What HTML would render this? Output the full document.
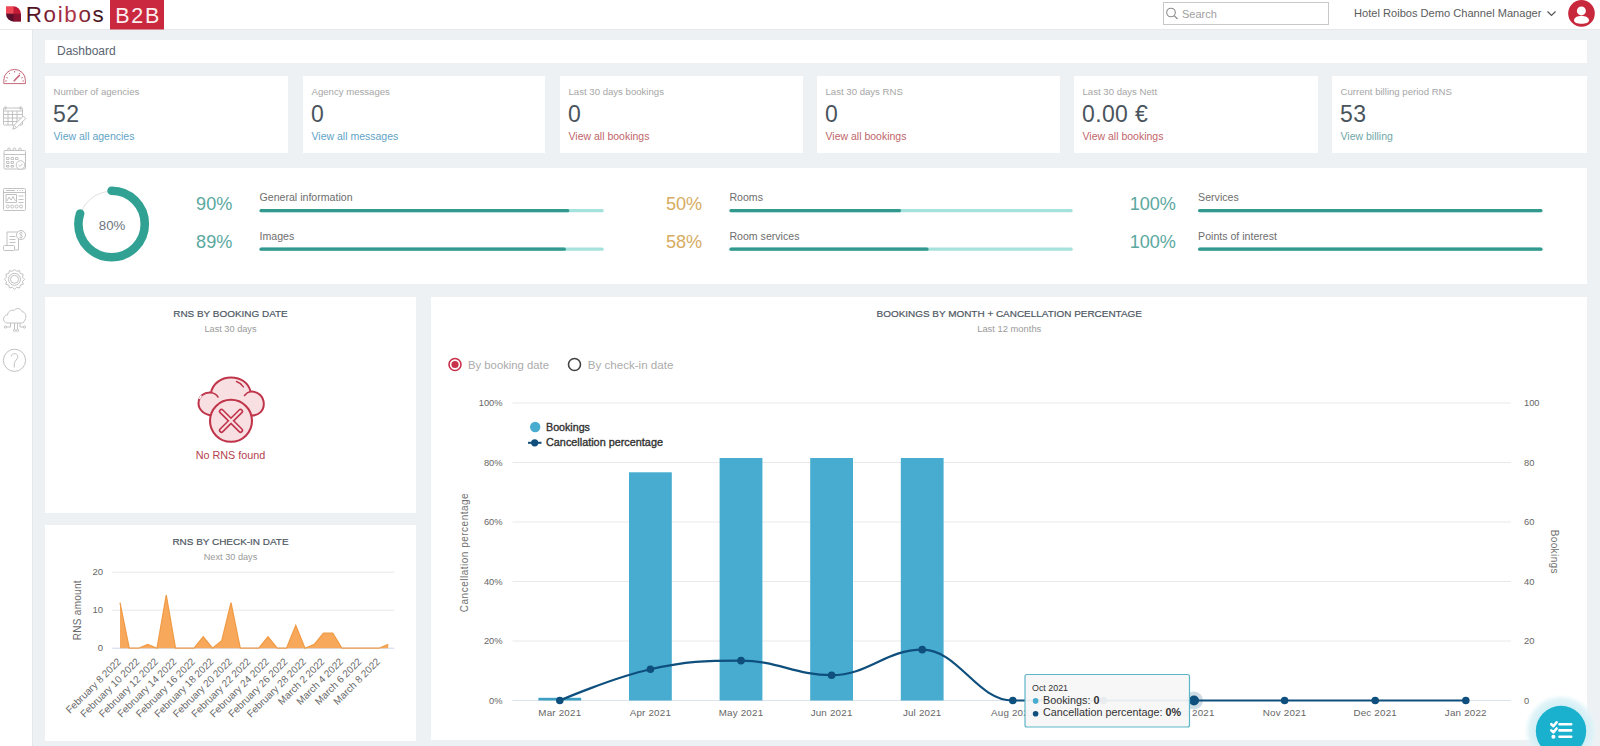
<!DOCTYPE html>
<html><head><meta charset="utf-8"><title>Dashboard</title>
<style>
html,body{margin:0;padding:0;}
body{width:1600px;height:746px;overflow:hidden;position:relative;background:#eef1f4;font-family:"Liberation Sans", sans-serif;}
svg text{font-family:"Liberation Sans", sans-serif;}
</style></head><body>
<div style="position:absolute;left:0px;top:0px;width:1600px;height:29px;background:#ffffff;z-index:2"></div><div style="position:absolute;left:0px;top:29px;width:1600px;height:1px;background:#e6e9ec;z-index:2"></div><div style="position:absolute;left:0px;top:30px;width:32px;height:716px;background:#ffffff;"></div><div style="position:absolute;left:32px;top:30px;width:1px;height:716px;background:#e4e8ec;"></div><div style="position:absolute;left:45px;top:40px;width:1542px;height:23px;background:#ffffff;"></div><div style="position:absolute;left:45px;top:76px;width:243px;height:77px;background:#ffffff;"></div><div style="position:absolute;left:303px;top:76px;width:242px;height:77px;background:#ffffff;"></div><div style="position:absolute;left:560px;top:76px;width:243px;height:77px;background:#ffffff;"></div><div style="position:absolute;left:817px;top:76px;width:243px;height:77px;background:#ffffff;"></div><div style="position:absolute;left:1074px;top:76px;width:244px;height:77px;background:#ffffff;"></div><div style="position:absolute;left:1332px;top:76px;width:255px;height:77px;background:#ffffff;"></div><div style="position:absolute;left:45px;top:168px;width:1542px;height:116px;background:#ffffff;"></div><div style="position:absolute;left:45px;top:297px;width:371px;height:216px;background:#ffffff;"></div><div style="position:absolute;left:45px;top:525px;width:371px;height:216px;background:#ffffff;"></div><div style="position:absolute;left:431px;top:297px;width:1156px;height:443px;background:#ffffff;"></div>
<svg width="1600" height="746" viewBox="0 0 1600 746" style="position:absolute;left:0;top:0;z-index:3">
<defs><clipPath id="leaf"><path d="M6,6.2 H13 A8,8 0 0 1 21,14.2 V21.7 H14 A8,8 0 0 1 6,13.7 Z"/></clipPath><linearGradient id="rg" x1="0" x2="1" y1="0" y2="0"><stop offset="0" stop-color="#3c0d20"/><stop offset="0.45" stop-color="#a02a40"/><stop offset="0.6" stop-color="#b03446"/><stop offset="1" stop-color="#2e0a18"/></linearGradient></defs>
<g clip-path="url(#leaf)"><rect x="6" y="6" width="8" height="8" fill="#ee4857"/><rect x="13.5" y="6" width="8" height="8" fill="#c21a36"/><rect x="6" y="13.7" width="8" height="8.2" fill="#5a0f2c"/><rect x="13.5" y="13.7" width="8" height="8.2" fill="#86122f"/></g>
<text x="25.8" y="22.1" font-size="22.4" fill="url(#rg)" font-weight="normal" text-anchor="start" letter-spacing="1.65">Roibos</text>
<rect x="110" y="0" width="54" height="29.5" fill="#c9283e"/>
<text x="138.2" y="22.8" font-size="21.5" fill="#fdeef0" font-weight="normal" text-anchor="middle" letter-spacing="1.7">B2B</text>
<rect x="1163.5" y="2.5" width="165" height="22" fill="#fff" stroke="#c8c8c8" stroke-width="1"/>
<circle cx="1171" cy="12.5" r="4.3" fill="none" stroke="#8a8a8a" stroke-width="1.1"/><path d="M1174.2,15.7 L1177.5,19" stroke="#8a8a8a" stroke-width="1.2"/>
<text x="1182" y="18" font-size="11" fill="#a0a0a0" font-weight="normal" text-anchor="start" >Search</text>
<text x="1354" y="17" font-size="11.1" fill="#5c5c5c" font-weight="normal" text-anchor="start" >Hotel Roibos Demo Channel Manager</text>
<path d="M1547.5,11.5 L1551.5,15.5 L1555.5,11.5" fill="none" stroke="#555" stroke-width="1.2"/>
<circle cx="1581.5" cy="13.4" r="13.3" fill="#c8283c"/>
<circle cx="1581.4" cy="10.9" r="4.5" fill="#fff"/><path d="M1574,20.5 C1574,17.5 1577.5,16.1 1581.5,16.1 C1585.5,16.1 1589,17.5 1589,20.5 C1589,22.5 1585.5,23.8 1581.5,23.8 C1577.5,23.8 1574,22.5 1574,20.5 Z" fill="#fff"/>
<text x="57" y="54.7" font-size="12" fill="#5a6470" font-weight="normal" text-anchor="start" >Dashboard</text>
<text x="53.5" y="94.7" font-size="9.6" fill="#a6a6a6" font-weight="normal" text-anchor="start" >Number of agencies</text>
<text x="53.0" y="121.6" font-size="23" fill="#4a545d" font-weight="normal" text-anchor="start" letter-spacing="0.35">52</text>
<text x="53.5" y="140" font-size="10.5" fill="#5fa3c6" font-weight="normal" text-anchor="start" >View all agencies</text>
<text x="311.5" y="94.7" font-size="9.6" fill="#a6a6a6" font-weight="normal" text-anchor="start" >Agency messages</text>
<text x="311.0" y="121.6" font-size="23" fill="#4a545d" font-weight="normal" text-anchor="start" letter-spacing="0.35">0</text>
<text x="311.5" y="140" font-size="10.5" fill="#5fa3c6" font-weight="normal" text-anchor="start" >View all messages</text>
<text x="568.5" y="94.7" font-size="9.6" fill="#a6a6a6" font-weight="normal" text-anchor="start" >Last 30 days bookings</text>
<text x="568.0" y="121.6" font-size="23" fill="#4a545d" font-weight="normal" text-anchor="start" letter-spacing="0.35">0</text>
<text x="568.5" y="140" font-size="10.5" fill="#c0666a" font-weight="normal" text-anchor="start" >View all bookings</text>
<text x="825.5" y="94.7" font-size="9.6" fill="#a6a6a6" font-weight="normal" text-anchor="start" >Last 30 days RNS</text>
<text x="825.0" y="121.6" font-size="23" fill="#4a545d" font-weight="normal" text-anchor="start" letter-spacing="0.35">0</text>
<text x="825.5" y="140" font-size="10.5" fill="#c0666a" font-weight="normal" text-anchor="start" >View all bookings</text>
<text x="1082.5" y="94.7" font-size="9.6" fill="#a6a6a6" font-weight="normal" text-anchor="start" >Last 30 days Nett</text>
<text x="1082.0" y="121.6" font-size="23" fill="#4a545d" font-weight="normal" text-anchor="start" letter-spacing="0.35">0.00 €</text>
<text x="1082.5" y="140" font-size="10.5" fill="#c0666a" font-weight="normal" text-anchor="start" >View all bookings</text>
<text x="1340.5" y="94.7" font-size="9.6" fill="#a6a6a6" font-weight="normal" text-anchor="start" >Current billing period RNS</text>
<text x="1340.0" y="121.6" font-size="23" fill="#4a545d" font-weight="normal" text-anchor="start" letter-spacing="0.35">53</text>
<text x="1340.5" y="140" font-size="10.5" fill="#6fa6a6" font-weight="normal" text-anchor="start" >View billing</text>
<circle cx="111.6" cy="224" r="32.7" fill="none" stroke="#e0e0e0" stroke-width="1"/>
<circle cx="111.6" cy="224" r="33.2" fill="none" stroke="#30a192" stroke-width="8.6" stroke-linecap="round" stroke-dasharray="166.88 208.60" transform="rotate(-90 111.6 224)"/>
<text x="112" y="230" font-size="13.2" fill="#6b7480" font-weight="normal" text-anchor="middle" >80%</text>
<text x="214.2" y="210.1" font-size="18.1" fill="#5aa8a0" font-weight="normal" text-anchor="middle" >90%</text>
<text x="259.5" y="201.1" font-size="10.6" fill="#6e6e6e" font-weight="normal" text-anchor="start" >General information</text>
<rect x="259.5" y="209" width="344.25" height="3.3" rx="1.65" fill="#a6e2dc"/>
<rect x="259.5" y="209" width="309.82" height="3.3" rx="1.65" fill="#33988e"/>
<text x="214.2" y="248.3" font-size="18.1" fill="#5aa8a0" font-weight="normal" text-anchor="middle" >89%</text>
<text x="259.5" y="239.8" font-size="10.6" fill="#6e6e6e" font-weight="normal" text-anchor="start" >Images</text>
<rect x="259.5" y="247.5" width="344.25" height="3.3" rx="1.65" fill="#a6e2dc"/>
<rect x="259.5" y="247.5" width="306.38" height="3.3" rx="1.65" fill="#33988e"/>
<text x="684.1" y="210.1" font-size="18.1" fill="#d6ac62" font-weight="normal" text-anchor="middle" >50%</text>
<text x="729.4" y="201.1" font-size="10.6" fill="#6e6e6e" font-weight="normal" text-anchor="start" >Rooms</text>
<rect x="729.4" y="209" width="343.35" height="3.3" rx="1.65" fill="#a6e2dc"/>
<rect x="729.4" y="209" width="171.68" height="3.3" rx="1.65" fill="#33988e"/>
<text x="684.1" y="248.3" font-size="18.1" fill="#d6ac62" font-weight="normal" text-anchor="middle" >58%</text>
<text x="729.4" y="239.8" font-size="10.6" fill="#6e6e6e" font-weight="normal" text-anchor="start" >Room services</text>
<rect x="729.4" y="247.5" width="343.35" height="3.3" rx="1.65" fill="#a6e2dc"/>
<rect x="729.4" y="247.5" width="199.14" height="3.3" rx="1.65" fill="#33988e"/>
<text x="1152.8" y="210.1" font-size="18.1" fill="#5aa8a0" font-weight="normal" text-anchor="middle" >100%</text>
<text x="1198.1" y="201.1" font-size="10.6" fill="#6e6e6e" font-weight="normal" text-anchor="start" >Services</text>
<rect x="1198.1" y="209" width="344.4000000000001" height="3.3" rx="1.65" fill="#a6e2dc"/>
<rect x="1198.1" y="209" width="344.40" height="3.3" rx="1.65" fill="#33988e"/>
<text x="1152.8" y="248.3" font-size="18.1" fill="#5aa8a0" font-weight="normal" text-anchor="middle" >100%</text>
<text x="1198.1" y="239.8" font-size="10.6" fill="#6e6e6e" font-weight="normal" text-anchor="start" >Points of interest</text>
<rect x="1198.1" y="247.5" width="344.4000000000001" height="3.3" rx="1.65" fill="#a6e2dc"/>
<rect x="1198.1" y="247.5" width="344.40" height="3.3" rx="1.65" fill="#33988e"/>
<text x="230.5" y="317.2" font-size="9.95" fill="#4d5762" font-weight="normal" text-anchor="middle" stroke="#4d5762" stroke-width="0.2">RNS BY BOOKING DATE</text>
<text x="230.5" y="331.5" font-size="9.2" fill="#9a9a9a" font-weight="normal" text-anchor="middle" >Last 30 days</text>
<path d="M213,415.5 C204.5,415 198.3,410 198.5,403 C198.8,396 204,392 211,392.5 C213,383.5 221,377.5 231,377.5 C241,377.5 248.5,383 250.5,391.5 C258,391 263.8,396.5 263.8,404 C263.8,411 258.5,415.5 252,415.5 Z" fill="#f8dfe2" stroke="#c0344a" stroke-width="2"/>
<path d="M211,392.5 C214,393 216.5,394.5 218,397 M250.5,391.5 C248,392 246,393.5 244.5,395.5" fill="none" stroke="#c0344a" stroke-width="1.6" stroke-linecap="round"/>
<path d="M236.5,381.5 C239.5,382.5 242,384.5 243.5,387" fill="none" stroke="#c0344a" stroke-width="1.4" stroke-linecap="round"/>
<path d="M199.5,399 C200,397.5 200.5,396.5 201.5,395.5" fill="none" stroke="#fff" stroke-width="1.6"/>
<circle cx="231" cy="420.8" r="21" fill="#f8dfe2" stroke="#c0344a" stroke-width="2.1"/>
<path d="M221.5,411.3 L240.5,430.3 M240.5,411.3 L221.5,430.3" stroke="#c0344a" stroke-width="5.4" stroke-linecap="round"/>
<path d="M221.5,411.3 L240.5,430.3 M240.5,411.3 L221.5,430.3" stroke="#f8dfe2" stroke-width="2.2" stroke-linecap="round"/>

<text x="230.5" y="459" font-size="10.8" fill="#b5414e" font-weight="normal" text-anchor="middle" >No RNS found</text>
<text x="230.5" y="545.2" font-size="9.95" fill="#4d5762" font-weight="normal" text-anchor="middle" stroke="#4d5762" stroke-width="0.2">RNS BY CHECK-IN DATE</text>
<text x="230.5" y="559.5" font-size="9.2" fill="#9a9a9a" font-weight="normal" text-anchor="middle" >Next 30 days</text>
<rect x="112.3" y="571.7" width="282" height="1" fill="#e9e9e9"/>
<rect x="112.3" y="609.7" width="282" height="1" fill="#e9e9e9"/>
<rect x="112.3" y="647.7" width="282" height="1" fill="#ccd6eb"/>
<text x="103" y="575.2" font-size="9.5" fill="#666" font-weight="normal" text-anchor="end" >20</text>
<text x="103" y="613.2" font-size="9.5" fill="#666" font-weight="normal" text-anchor="end" >10</text>
<text x="103" y="651.2" font-size="9.5" fill="#666" font-weight="normal" text-anchor="end" >0</text>
<text x="0" y="0" font-size="10" fill="#6a6a6a" font-weight="normal" text-anchor="middle" transform="translate(80.8 610.2) rotate(-90)" letter-spacing="0.3">RNS amount</text>
<path d="M120.00,602.60 L129.25,648.20 L138.50,648.20 L147.75,644.40 L157.00,648.20 L166.25,595.00 L175.50,648.20 L184.75,648.20 L194.00,648.20 L203.25,636.80 L212.50,648.20 L221.75,640.60 L231.00,602.60 L240.25,648.20 L249.50,648.20 L258.75,648.20 L268.00,636.80 L277.25,648.20 L286.50,648.20 L295.75,625.40 L305.00,648.20 L314.25,644.40 L323.50,633.00 L332.75,633.00 L342.00,648.20 L351.25,648.20 L360.50,648.20 L369.75,648.20 L379.00,648.20 L388.25,644.40 L388.25,648.2 L120.00,648.2 Z" fill="#f8a85a" stroke="none"/>
<path d="M120.00,602.60 L129.25,648.20 L138.50,648.20 L147.75,644.40 L157.00,648.20 L166.25,595.00 L175.50,648.20 L184.75,648.20 L194.00,648.20 L203.25,636.80 L212.50,648.20 L221.75,640.60 L231.00,602.60 L240.25,648.20 L249.50,648.20 L258.75,648.20 L268.00,636.80 L277.25,648.20 L286.50,648.20 L295.75,625.40 L305.00,648.20 L314.25,644.40 L323.50,633.00 L332.75,633.00 L342.00,648.20 L351.25,648.20 L360.50,648.20 L369.75,648.20 L379.00,648.20 L388.25,644.40" fill="none" stroke="#ef9a45" stroke-width="1.2"/>
<text x="0" y="0" font-size="10" fill="#6a6a6a" font-weight="normal" text-anchor="end" transform="translate(121.80 662.2) rotate(-45)">February 8 2022</text>
<text x="0" y="0" font-size="10" fill="#6a6a6a" font-weight="normal" text-anchor="end" transform="translate(140.30 662.2) rotate(-45)">February 10 2022</text>
<text x="0" y="0" font-size="10" fill="#6a6a6a" font-weight="normal" text-anchor="end" transform="translate(158.80 662.2) rotate(-45)">February 12 2022</text>
<text x="0" y="0" font-size="10" fill="#6a6a6a" font-weight="normal" text-anchor="end" transform="translate(177.30 662.2) rotate(-45)">February 14 2022</text>
<text x="0" y="0" font-size="10" fill="#6a6a6a" font-weight="normal" text-anchor="end" transform="translate(195.80 662.2) rotate(-45)">February 16 2022</text>
<text x="0" y="0" font-size="10" fill="#6a6a6a" font-weight="normal" text-anchor="end" transform="translate(214.30 662.2) rotate(-45)">February 18 2022</text>
<text x="0" y="0" font-size="10" fill="#6a6a6a" font-weight="normal" text-anchor="end" transform="translate(232.80 662.2) rotate(-45)">February 20 2022</text>
<text x="0" y="0" font-size="10" fill="#6a6a6a" font-weight="normal" text-anchor="end" transform="translate(251.30 662.2) rotate(-45)">February 22 2022</text>
<text x="0" y="0" font-size="10" fill="#6a6a6a" font-weight="normal" text-anchor="end" transform="translate(269.80 662.2) rotate(-45)">February 24 2022</text>
<text x="0" y="0" font-size="10" fill="#6a6a6a" font-weight="normal" text-anchor="end" transform="translate(288.30 662.2) rotate(-45)">February 26 2022</text>
<text x="0" y="0" font-size="10" fill="#6a6a6a" font-weight="normal" text-anchor="end" transform="translate(306.80 662.2) rotate(-45)">February 28 2022</text>
<text x="0" y="0" font-size="10" fill="#6a6a6a" font-weight="normal" text-anchor="end" transform="translate(325.30 662.2) rotate(-45)">March 2 2022</text>
<text x="0" y="0" font-size="10" fill="#6a6a6a" font-weight="normal" text-anchor="end" transform="translate(343.80 662.2) rotate(-45)">March 4 2022</text>
<text x="0" y="0" font-size="10" fill="#6a6a6a" font-weight="normal" text-anchor="end" transform="translate(362.30 662.2) rotate(-45)">March 6 2022</text>
<text x="0" y="0" font-size="10" fill="#6a6a6a" font-weight="normal" text-anchor="end" transform="translate(380.80 662.2) rotate(-45)">March 8 2022</text>
<text x="1009.25" y="317.3" font-size="9.95" fill="#4d5762" font-weight="normal" text-anchor="middle" stroke="#4d5762" stroke-width="0.2">BOOKINGS BY MONTH + CANCELLATION PERCENTAGE</text>
<text x="1009.25" y="332" font-size="9.4" fill="#9a9a9a" font-weight="normal" text-anchor="middle" >Last 12 months</text>
<circle cx="455" cy="364.5" r="6" fill="#fff" stroke="#c8324a" stroke-width="1.6"/><circle cx="455" cy="364.5" r="3.6" fill="#c8324a"/>
<text x="468" y="368.5" font-size="11.3" fill="#ababab" font-weight="normal" text-anchor="start" >By booking date</text>
<circle cx="574.5" cy="364.5" r="6" fill="#fff" stroke="#444" stroke-width="1.6"/>
<text x="587.7" y="368.5" font-size="11.6" fill="#ababab" font-weight="normal" text-anchor="start" >By check-in date</text>
<rect x="512.5" y="640.50" width="998.5" height="1" fill="#e9e9e9"/>
<text x="502.5" y="644.2" font-size="9.3" fill="#666" font-weight="normal" text-anchor="end" >20%</text>
<text x="1524" y="644.2" font-size="9.3" fill="#666" font-weight="normal" text-anchor="start" >20</text>
<rect x="512.5" y="581.00" width="998.5" height="1" fill="#e9e9e9"/>
<text x="502.5" y="584.7" font-size="9.3" fill="#666" font-weight="normal" text-anchor="end" >40%</text>
<text x="1524" y="584.7" font-size="9.3" fill="#666" font-weight="normal" text-anchor="start" >40</text>
<rect x="512.5" y="521.50" width="998.5" height="1" fill="#e9e9e9"/>
<text x="502.5" y="525.2" font-size="9.3" fill="#666" font-weight="normal" text-anchor="end" >60%</text>
<text x="1524" y="525.2" font-size="9.3" fill="#666" font-weight="normal" text-anchor="start" >60</text>
<rect x="512.5" y="462.00" width="998.5" height="1" fill="#e9e9e9"/>
<text x="502.5" y="465.7" font-size="9.3" fill="#666" font-weight="normal" text-anchor="end" >80%</text>
<text x="1524" y="465.7" font-size="9.3" fill="#666" font-weight="normal" text-anchor="start" >80</text>
<rect x="512.5" y="402.50" width="998.5" height="1" fill="#e9e9e9"/>
<text x="502.5" y="406.2" font-size="9.3" fill="#666" font-weight="normal" text-anchor="end" >100%</text>
<text x="1524" y="406.2" font-size="9.3" fill="#666" font-weight="normal" text-anchor="start" >100</text>
<rect x="512.5" y="700.0" width="998.5" height="1" fill="#dde3ea"/>
<text x="502.5" y="703.7" font-size="9.3" fill="#666" font-weight="normal" text-anchor="end" >0%</text>
<text x="1524" y="703.7" font-size="9.3" fill="#666" font-weight="normal" text-anchor="start" >0</text>
<text x="0" y="0" font-size="10" fill="#707070" font-weight="normal" text-anchor="middle" transform="translate(467.8 552.5) rotate(-90)" letter-spacing="0.5">Cancellation percentage</text>
<text x="0" y="0" font-size="10" fill="#707070" font-weight="normal" text-anchor="middle" transform="translate(1551.3 551.8) rotate(90)" letter-spacing="0.4">Bookings</text>
<text x="559.8" y="716.4" font-size="9.8" fill="#666" font-weight="normal" text-anchor="middle" letter-spacing="0.2">Mar 2021</text>
<text x="650.4" y="716.4" font-size="9.8" fill="#666" font-weight="normal" text-anchor="middle" letter-spacing="0.2">Apr 2021</text>
<text x="741.0" y="716.4" font-size="9.8" fill="#666" font-weight="normal" text-anchor="middle" letter-spacing="0.2">May 2021</text>
<text x="831.5999999999999" y="716.4" font-size="9.8" fill="#666" font-weight="normal" text-anchor="middle" letter-spacing="0.2">Jun 2021</text>
<text x="922.1999999999999" y="716.4" font-size="9.8" fill="#666" font-weight="normal" text-anchor="middle" letter-spacing="0.2">Jul 2021</text>
<text x="1012.8" y="716.4" font-size="9.8" fill="#666" font-weight="normal" text-anchor="middle" letter-spacing="0.2">Aug 2021</text>
<text x="1103.3999999999999" y="716.4" font-size="9.8" fill="#666" font-weight="normal" text-anchor="middle" letter-spacing="0.2">Sep 2021</text>
<text x="1194.0" y="716.4" font-size="9.8" fill="#666" font-weight="normal" text-anchor="middle" letter-spacing="0.2">Oct 2021</text>
<text x="1284.6" y="716.4" font-size="9.8" fill="#666" font-weight="normal" text-anchor="middle" letter-spacing="0.2">Nov 2021</text>
<text x="1375.1999999999998" y="716.4" font-size="9.8" fill="#666" font-weight="normal" text-anchor="middle" letter-spacing="0.2">Dec 2021</text>
<text x="1465.8" y="716.4" font-size="9.8" fill="#666" font-weight="normal" text-anchor="middle" letter-spacing="0.2">Jan 2022</text>
<rect x="538.40" y="697.8" width="42.8" height="2.70" fill="#3d9fc2"/>
<rect x="629.00" y="472.3" width="42.8" height="228.20" fill="#47acd0"/>
<rect x="719.60" y="458" width="42.8" height="242.50" fill="#47acd0"/>
<rect x="810.20" y="458" width="42.8" height="242.50" fill="#47acd0"/>
<rect x="900.80" y="458" width="42.8" height="242.50" fill="#47acd0"/>
<path d="M559.80,700.50 C559.80,700.50 614.16,677.24 650.40,669.26 C686.64,661.29 704.76,660.63 741.00,660.63 C777.24,660.63 795.36,675.21 831.60,675.21 C867.84,675.21 885.96,649.63 922.20,649.63 C958.44,649.63 976.56,700.50 1012.80,700.50 C1049.04,700.50 1067.16,700.50 1103.40,700.50 C1139.64,700.50 1157.76,700.50 1194.00,700.50 C1230.24,700.50 1248.36,700.50 1284.60,700.50 C1320.84,700.50 1338.96,700.50 1375.20,700.50 C1411.44,700.50 1465.80,700.50 1465.80,700.50" fill="none" stroke="#0e4f7d" stroke-width="2.2"/>
<circle cx="559.8" cy="700.5" r="3.8" fill="#0e4f7d"/>
<circle cx="650.4" cy="669.2625" r="3.8" fill="#0e4f7d"/>
<circle cx="741.0" cy="660.635" r="3.8" fill="#0e4f7d"/>
<circle cx="831.5999999999999" cy="675.2125" r="3.8" fill="#0e4f7d"/>
<circle cx="922.1999999999999" cy="649.6275" r="3.8" fill="#0e4f7d"/>
<circle cx="1012.8" cy="700.5" r="3.8" fill="#0e4f7d"/>
<circle cx="1103.3999999999999" cy="700.5" r="3.8" fill="#0e4f7d"/>
<circle cx="1194.0" cy="700.5" r="9" fill="#0e4f7d" opacity="0.2"/><circle cx="1194.0" cy="700.5" r="5" fill="#0e4f7d"/>
<circle cx="1284.6" cy="700.5" r="3.8" fill="#0e4f7d"/>
<circle cx="1375.1999999999998" cy="700.5" r="3.8" fill="#0e4f7d"/>
<circle cx="1465.8" cy="700.5" r="3.8" fill="#0e4f7d"/>
<circle cx="535.2" cy="427" r="5.2" fill="#47acd0"/>
<text x="546" y="431.4" font-size="10.7" fill="#333" font-weight="normal" text-anchor="start" stroke="#333" stroke-width="0.35">Bookings</text>
<rect x="528" y="441.8" width="13.5" height="2" fill="#0e4f7d"/><circle cx="534.7" cy="442.8" r="3.6" fill="#0e4f7d"/>
<text x="546" y="446.3" font-size="10.85" fill="#333" font-weight="normal" text-anchor="start" stroke="#333" stroke-width="0.35">Cancellation percentage</text>
<rect x="1025" y="674.5" width="164.5" height="52.5" rx="2" fill="#f7f7f7" fill-opacity="0.94" stroke="#5db5c8" stroke-width="1.2"/>
<text x="1032" y="691.3" font-size="8.9" fill="#333" font-weight="normal" text-anchor="start" >Oct 2021</text>
<circle cx="1035.6" cy="700.9" r="2.8" fill="#47acd0"/>
<text x="1043" y="703.8" font-size="10.8" fill="#333" font-weight="normal" text-anchor="start" >Bookings: <tspan font-weight="bold">0</tspan></text>
<circle cx="1035.6" cy="713.8" r="2.8" fill="#0e4f7d"/>
<text x="1043" y="716.3" font-size="10.8" fill="#333" font-weight="normal" text-anchor="start" >Cancellation percentage: <tspan font-weight="bold">0%</tspan></text>
<defs><radialGradient id="halo" cx="0.5" cy="0.5" r="0.5"><stop offset="0.68" stop-color="#d2eff5" stop-opacity="1"/><stop offset="0.85" stop-color="#dcf2f7" stop-opacity="0.9"/><stop offset="1" stop-color="#e8f6f9" stop-opacity="0"/></radialGradient></defs>
<circle cx="1561" cy="731" r="37" fill="url(#halo)"/><circle cx="1561" cy="731" r="25.2" fill="#19b1cd"/>
<g fill="none" stroke="#fff" stroke-width="2.6" stroke-linecap="round" stroke-linejoin="round">
<path d="M1551.3,724.2 L1553.4,726.2 L1556.6,722.3"/><path d="M1551.3,730.4 L1553.4,732.4 L1556.6,728.5"/>
<path d="M1559.5,724.2 H1571.2 M1559.5,730.4 H1571.2 M1559.5,736.8 H1571.2"/></g>
<circle cx="1553.4" cy="736.8" r="2" fill="#fff"/>
<g fill="none" stroke="#c6687a" stroke-width="1" stroke-linejoin="round">
<path d="M3.8,83.6 V80.2 A10.8,10.8 0 0 1 25.4,80.2 V83.6 Z"/>
<path d="M14.2,80.8 L19.4,75.4" stroke-width="1.6" stroke-linecap="round"/>
<path d="M6.4,77.4 L7.9,78.1 M8.9,72.9 L10,74 M14.6,70.9 L14.6,72.5 M20.3,72.9 L19.2,74 M22.8,77.4 L21.3,78.1 M5.2,81 H6.8 M22.4,81 H24"/>
</g>
<g fill="none" stroke="#c2c2c2" stroke-width="1" stroke-linejoin="round">
<rect x="3.5" y="108" width="19" height="17" rx="0.8"/>
<path d="M3.5,111 H22.5 M3.5,114.5 H22.5 M3.5,118 H22.5 M3.5,121.5 H20 M8,111 V125 M12.5,111 V125 M17,111 V121"/>
<path d="M5.5,106.5 V109.5 M20.5,106.5 V109.5" stroke-width="2"/>
<path d="M12.8,129.2 L14,125.3 L23.3,116 L25.8,118.5 L16.5,127.8 Z" fill="#fff"/>
<path d="M14,125.3 L16.5,127.8"/>
<rect x="4" y="150.5" width="21.5" height="18.5" rx="1"/>
<path d="M4,154.5 H25.5"/>
<circle cx="9" cy="149.3" r="1.3" fill="#fff"/><circle cx="14.5" cy="149.3" r="1.3" fill="#fff"/><circle cx="20" cy="149.3" r="1.3" fill="#fff"/>
<path d="M6.5,157.5 H9 V159.5 H6.5 Z M11,157.5 H13.5 V159.5 H11 Z M15.5,157.5 H18 V159.5 H15.5 Z M6.5,161.5 H9 V163.5 H6.5 Z M11,161.5 H13.5 V163.5 H11 Z M6.5,165.5 H9 V167 H6.5 Z M11,165.5 H13.5 V167 H11 Z"/>
<circle cx="20.5" cy="165" r="4.3" fill="#fff"/><path d="M18.6,165 L20,166.4 L22.5,163.8"/>
<rect x="3.5" y="188.5" width="22" height="22" rx="1"/>
<path d="M3.5,192.5 H25.5 M6,190.5 H15 M17,190.5 H18 M19.5,190.5 H20.5 M22,190.5 H23"/>
<rect x="6" y="194.5" width="10.5" height="8"/>
<path d="M7,201 L9,197 L11,200 L13,196.5 L15.5,201"/>
<path d="M18.5,196 H23.5 M18.5,199.5 H23.5 M18.5,202.5 H23.5"/>
<circle cx="7.8" cy="206.5" r="1.5"/><circle cx="12.2" cy="206.5" r="1.5"/><circle cx="16.6" cy="206.5" r="1.5"/><circle cx="21" cy="206.5" r="1.5"/>
<path d="M7,245.5 V232 H18.5 V250 H14.5"/>
<rect x="3.5" y="245.5" width="11" height="5" rx="1" fill="#fff"/>
<path d="M9.5,236.5 H15.5 M9.5,239.5 H15.5 M9.5,242.5 H15.5"/>
<circle cx="21" cy="235" r="4.5" fill="#fff"/>
<path d="M22.5,232.8 C21.8,232 19.5,232.2 19.6,233.8 C19.7,235.3 22.5,234.8 22.5,236.5 C22.5,238 20.2,238 19.5,237.2 M21,231.5 V238.5" stroke-width="0.8"/>
<path d="M14.5,269.2 L16.6,271.3 L19.5,270.6 L20.3,273.5 L23.2,274.3 L22.5,277.2 L24.6,279.3 L22.5,281.4 L23.2,284.3 L20.3,285.1 L19.5,288 L16.6,287.3 L14.5,289.4 L12.4,287.3 L9.5,288 L8.7,285.1 L5.8,284.3 L6.5,281.4 L4.4,279.3 L6.5,277.2 L5.8,274.3 L8.7,273.5 L9.5,270.6 L12.4,271.3 Z"/>
<circle cx="14.5" cy="279.3" r="6"/><circle cx="14.5" cy="279.3" r="4"/>
<path d="M8,323 C4,323 2.5,319.5 4.2,316.8 C5,315.3 6.5,314.8 7.5,315 C7.8,311.5 11,309.5 14,310.5 C15.5,308 20.5,307.5 22.2,311.8 C25.5,312 26.5,316 25.5,318.5 C25,321 23.5,323 21.5,323 Z"/>
<path d="M10.5,323 V327 H6.5 M14.5,323 V330 M17.5,323 V330 M20,323 V327 H23.5"/>
<circle cx="5.5" cy="327" r="1.1"/><circle cx="14.5" cy="330.5" r="1.1"/><circle cx="17.5" cy="330.5" r="1.1"/><circle cx="24.5" cy="327" r="1.1"/>
<circle cx="14.5" cy="360.3" r="11.1"/>
<path d="M11.3,356.5 C11.3,352.6 17.8,352.6 17.8,356.7 C17.8,359.6 14.3,360.4 14.3,363.8 V367.5"/>
</g>
</svg>
</body></html>
